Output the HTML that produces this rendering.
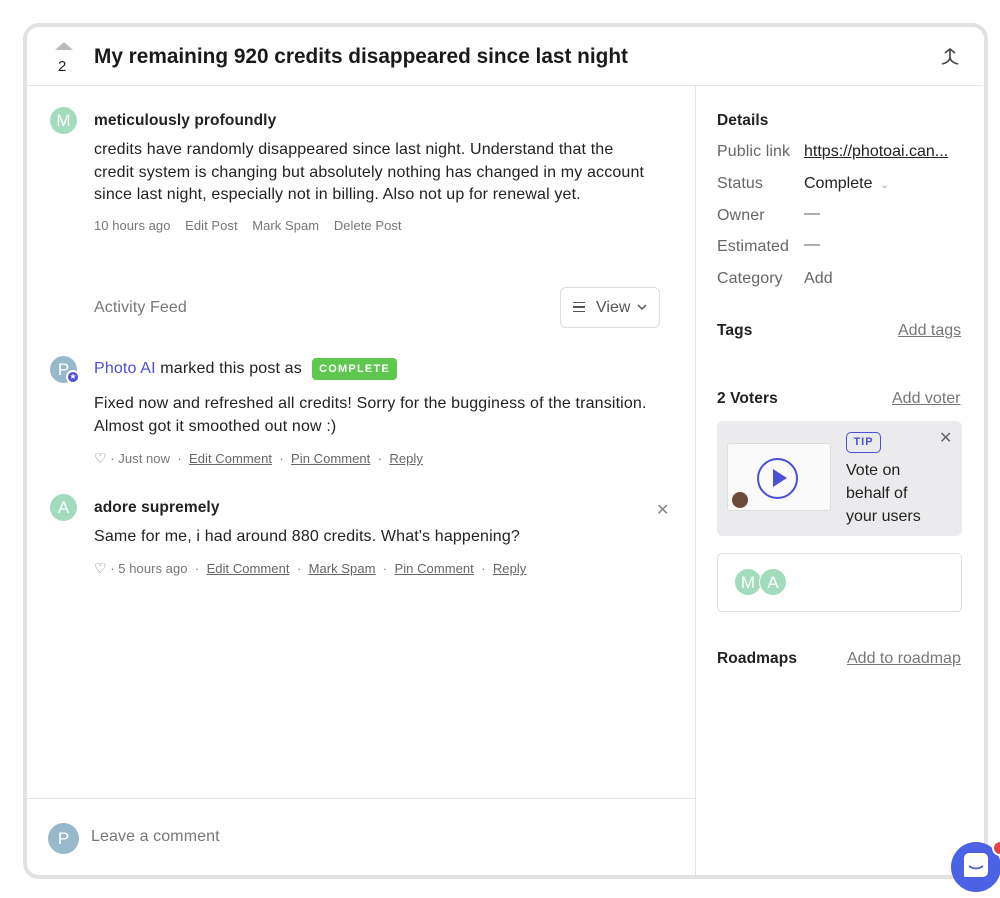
<!DOCTYPE html>
<html><head><meta charset="utf-8"><style>
*{box-sizing:border-box;margin:0;padding:0}
body{width:1000px;height:898px;background:#fff;font-family:"Liberation Sans",Arial,sans-serif;color:#222;position:relative;overflow:hidden}
.frame{position:absolute;left:23px;top:23px;width:965px;height:856px;border:4px solid #e2e2e2;border-radius:16px;background:#fff}
.abs{position:absolute;white-space:nowrap}
.t{font-size:16px;line-height:22.5px;letter-spacing:0.15px}
.meta{font-size:13px;color:#777;letter-spacing:0.05px}
.meta u{text-decoration:underline;color:#666}
.av{position:absolute;width:27px;height:27px;border-radius:50%;color:#fff;font-size:17px;text-align:center;line-height:27px}
.lbl{font-size:16px;color:#666;letter-spacing:0.1px}
.b{font-weight:bold;font-size:15.5px;letter-spacing:0.1px}
.link{font-size:16px;color:#777;text-decoration:underline}
</style></head><body>
<div class="frame"></div>
<div class="abs" style="left:55px;top:42px;width:0;height:0;border-left:9px solid transparent;border-right:9px solid transparent;border-bottom:8px solid #bbb"></div>
<div class="abs" style="left:58px;top:58px;font-size:15px">2</div>
<div class="abs" style="left:94px;top:45px;font-size:20.8px;font-weight:bold;color:#1a1a1a">My remaining 920 credits disappeared since last night</div>
<svg class="abs" style="left:940px;top:48px" width="20" height="18" viewBox="0 0 20 18"><path d="M5 5 L10 1 L15 5 M10 1 L10 9 M2 16 Q10 14 10 9 Q10 14 18 16" fill="none" stroke="#444" stroke-width="1.6"/></svg>
<div class="abs" style="left:27px;top:85px;width:956px;height:1px;background:#e5e5e5"></div>
<div class="abs" style="left:695px;top:86px;width:1px;height:789px;background:#e5e5e5"></div>
<div class="abs" style="left:27px;top:798px;width:668px;height:1px;background:#e5e5e5"></div>
<div class="av" style="left:50px;top:107px;background:#a3dbbd">M</div>
<div class="abs b" style="left:94px;top:112px">meticulously profoundly</div>
<div class="abs t" style="left:94px;top:139px">credits have randomly disappeared since last night. Understand that the<br>credit system is changing but absolutely nothing has changed in my account<br>since last night, especially not in billing. Also not up for renewal yet.</div>
<div class="abs meta" style="left:94px;top:218px">10 hours ago &nbsp;&nbsp; Edit Post &nbsp;&nbsp; Mark Spam &nbsp;&nbsp; Delete Post</div>
<div class="abs lbl" style="left:94px;top:299px;color:#777">Activity Feed</div>
<div class="abs" style="left:560px;top:287px;width:100px;height:41px;border:1px solid #ddd;border-radius:6px"></div>
<div class="abs" style="left:573px;top:302px;width:12px;height:10px;border-top:1.5px solid #555;border-bottom:1.5px solid #555"><div style="margin-top:3px;height:1.5px;background:#555"></div></div>
<div class="abs" style="left:596px;top:299px;font-size:16px;color:#555">View</div>
<svg class="abs" style="left:637px;top:304px" width="10" height="7"><path d="M1 1 L5 5 L9 1" fill="none" stroke="#555" stroke-width="1.5"/></svg>
<div class="av" style="left:50px;top:356px;background:#98b9cc">P</div>
<div class="abs" style="left:66px;top:370px;width:14px;height:14px;border-radius:50%;background:#4b50d6;border:2px solid #fff;color:#fff;font-size:8px;text-align:center;line-height:10px">★</div>
<div class="abs t" style="left:94px;top:358px"><span style="color:#4b4fd1">Photo AI</span> marked this post as</div>
<div class="abs" style="left:312px;top:358px;width:85px;height:22px;background:#5ec74d;border-radius:4px;color:#fff;font-size:11px;font-weight:bold;letter-spacing:1.2px;text-align:center;line-height:22px">COMPLETE</div>
<div class="abs t" style="left:94px;top:393px">Fixed now and refreshed all credits! Sorry for the bugginess of the transition.<br>Almost got it smoothed out now :)</div>
<div class="abs meta" style="left:94px;top:450px"><span style="font-size:14px">♡</span> · Just now &nbsp;·&nbsp; <u>Edit Comment</u> &nbsp;·&nbsp; <u>Pin Comment</u> &nbsp;·&nbsp; <u>Reply</u></div>
<div class="av" style="left:50px;top:494px;background:#a3dbbd">A</div>
<div class="abs b" style="left:94px;top:499px">adore supremely</div>
<div class="abs" style="left:656px;top:500px;color:#888;font-size:16px">✕</div>
<div class="abs t" style="left:94px;top:526px">Same for me, i had around 880 credits. What's happening?</div>
<div class="abs meta" style="left:94px;top:560px"><span style="font-size:14px">♡</span> · 5 hours ago &nbsp;·&nbsp; <u>Edit Comment</u> &nbsp;·&nbsp; <u>Mark Spam</u> &nbsp;·&nbsp; <u>Pin Comment</u> &nbsp;·&nbsp; <u>Reply</u></div>
<div class="av" style="left:48px;top:823px;width:31px;height:31px;line-height:31px;background:#98b9cc">P</div>
<div class="abs lbl" style="left:91px;top:828px;color:#777">Leave a comment</div>
<div class="abs b" style="left:717px;top:112px">Details</div>
<div class="abs lbl" style="left:717px;top:143px">Public link</div>
<div class="abs" style="left:804px;top:143px;font-size:16px;text-decoration:underline;color:#222">https://photoai.can...</div>
<div class="abs lbl" style="left:717px;top:175px">Status</div>
<div class="abs" style="left:804px;top:175px;font-size:16px">Complete <span style="color:#aaa;font-size:11px">&nbsp;⌄</span></div>
<div class="abs lbl" style="left:717px;top:207px">Owner</div><div class="abs lbl" style="left:804px;top:205px">—</div>
<div class="abs lbl" style="left:717px;top:238px">Estimated</div><div class="abs lbl" style="left:804px;top:236px">—</div>
<div class="abs lbl" style="left:717px;top:270px">Category</div><div class="abs lbl" style="left:804px;top:270px">Add</div>
<div class="abs b" style="left:717px;top:322px">Tags</div>
<div class="abs link" style="left:898px;top:322px">Add tags</div>
<div class="abs b" style="left:717px;top:390px">2 Voters</div>
<div class="abs link" style="left:892px;top:390px">Add voter</div>
<div class="abs" style="left:717px;top:421px;width:245px;height:115px;background:#ebebed;border-radius:6px"></div>
<div class="abs" style="left:727px;top:443px;width:104px;height:68px;background:#fafafa;border:1px solid #ddd;border-radius:3px"></div>
<div class="abs" style="left:757px;top:458px;width:41px;height:41px;border:2.5px solid #4b50d6;border-radius:50%"></div>
<div class="abs" style="left:773px;top:469px;width:0;height:0;border-top:9px solid transparent;border-bottom:9px solid transparent;border-left:14px solid #4b50d6"></div>
<div class="abs" style="left:732px;top:492px;width:16px;height:16px;border-radius:50%;background:#6b4a3a"></div>
<div class="abs" style="left:846px;top:432px;width:35px;height:21px;border:1.5px solid #4b50d6;border-radius:5px;color:#4b50d6;font-size:11px;font-weight:bold;text-align:center;line-height:18px;letter-spacing:1px">TIP</div>
<div class="abs" style="left:939px;top:428px;color:#666;font-size:16px">✕</div>
<div class="abs" style="left:846px;top:459px;font-size:16px;line-height:23px;color:#222">Vote on<br>behalf of<br>your users</div>
<div class="abs" style="left:717px;top:553px;width:245px;height:59px;border:1px solid #ddd;border-radius:5px"></div>
<div class="av" style="left:734px;top:568px;width:28px;height:28px;line-height:28px;background:#a3dbbd;border:1px solid #fff">M</div>
<div class="av" style="left:759px;top:568px;width:28px;height:28px;line-height:28px;background:#a3dbbd;border:1px solid #fff">A</div>
<div class="abs b" style="left:717px;top:650px">Roadmaps</div>
<div class="abs link" style="left:847px;top:650px">Add to roadmap</div>
<div class="abs" style="left:951px;top:842px;width:50px;height:50px;border-radius:50%;background:#4b62e4"></div>
<div class="abs" style="left:964px;top:853px;width:24px;height:24px;background:#fff;border-radius:5px 5px 5px 1px"></div>
<svg class="abs" style="left:968px;top:865px" width="16" height="6"><path d="M1 1 Q8 6 15 1" fill="none" stroke="#4b62e4" stroke-width="1.8"/></svg>
<div class="abs" style="left:992px;top:840px;width:16px;height:16px;border-radius:50%;background:#e54545;border:2px solid #fff"></div>
</body></html>
